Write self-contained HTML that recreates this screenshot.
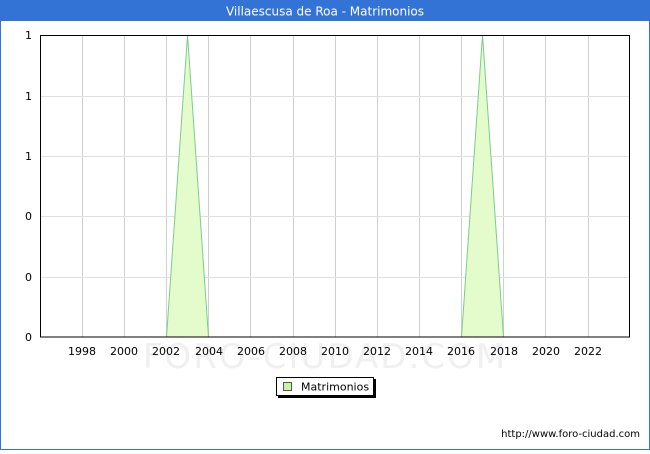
<!DOCTYPE html>
<html><head><style>
body{margin:0;width:650px;height:450px;overflow:hidden;background:#fff;font-family:"DejaVu Sans","Liberation Sans",sans-serif}
</style></head><body>
<svg width="650" height="450" xmlns="http://www.w3.org/2000/svg" font-family="DejaVu Sans, Liberation Sans, sans-serif">
<rect x="0.5" y="0.5" width="649" height="449" fill="#fff" stroke="#3473d6"/>
<rect x="0" y="0" width="650" height="21" fill="#3473d6"/>
<text x="325" y="15.5" fill="#fff" font-size="12" text-anchor="middle">Villaescusa de Roa - Matrimonios</text>
<text x="325" y="368" fill="#f0f0f0" font-size="34" text-anchor="middle" letter-spacing="2">FORO-CIUDAD.COM</text>
<g stroke="#d0d0d0" stroke-width="1">
<line x1="82.5" y1="35" x2="82.5" y2="337"/><line x1="124.5" y1="35" x2="124.5" y2="337"/>
<line x1="166.5" y1="35" x2="166.5" y2="337"/><line x1="208.5" y1="35" x2="208.5" y2="337"/>
<line x1="250.5" y1="35" x2="250.5" y2="337"/><line x1="293.5" y1="35" x2="293.5" y2="337"/>
<line x1="335.5" y1="35" x2="335.5" y2="337"/><line x1="377.5" y1="35" x2="377.5" y2="337"/>
<line x1="419.5" y1="35" x2="419.5" y2="337"/><line x1="461.5" y1="35" x2="461.5" y2="337"/>
<line x1="503.5" y1="35" x2="503.5" y2="337"/><line x1="545.5" y1="35" x2="545.5" y2="337"/>
<line x1="588.5" y1="35" x2="588.5" y2="337"/>
</g>
<g stroke="#e0e0e0"><line x1="40" y1="96.5" x2="630" y2="96.5"/><line x1="40" y1="156.5" x2="630" y2="156.5"/><line x1="40" y1="216.5" x2="630" y2="216.5"/><line x1="40" y1="277.5" x2="630" y2="277.5"/></g>
<polygon points="166.5,337 187.5,35 208.5,337" fill="#e4fccc" stroke="#7ccb8e"/>
<polygon points="461.5,337 482.5,35 503.5,337" fill="#e4fccc" stroke="#7ccb8e"/>
<rect x="40.5" y="35.5" width="589" height="301.5" fill="none" stroke="#000"/>
<g font-size="11" fill="#000" text-anchor="end">
<text x="32" y="39">1</text><text x="32" y="100">1</text><text x="32" y="160">1</text><text x="32" y="220">0</text><text x="32" y="281">0</text><text x="32" y="341">0</text>
</g>
<g font-size="11" fill="#000" text-anchor="middle">
<text x="82" y="355">1998</text><text x="124" y="355">2000</text><text x="166" y="355">2002</text><text x="209" y="355">2004</text><text x="251" y="355">2006</text><text x="293" y="355">2008</text><text x="335" y="355">2010</text><text x="377" y="355">2012</text><text x="419" y="355">2014</text><text x="461" y="355">2016</text><text x="504" y="355">2018</text><text x="546" y="355">2020</text><text x="588" y="355">2022</text>
</g>
<rect x="278" y="379" width="98" height="19" fill="#000"/>
<rect x="276.5" y="377.5" width="97" height="18" fill="#fff" stroke="#000"/>
<rect x="283.5" y="382.5" width="8" height="8" fill="#c8f5a0" stroke="#555"/>
<text x="301" y="390.5" font-size="11">Matrimonios</text>
<text x="640" y="437" font-size="10" text-anchor="end">http://www.foro-ciudad.com</text>
</svg>
</body></html>
